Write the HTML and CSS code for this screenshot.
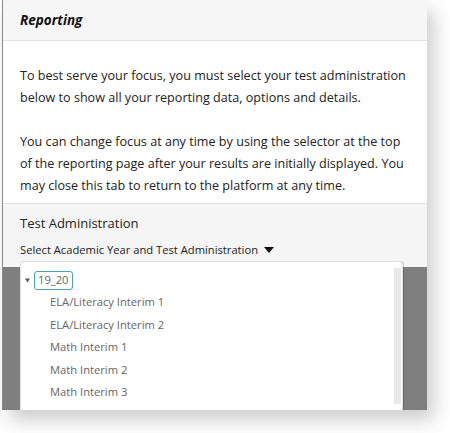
FILE: index.html
```html
<!DOCTYPE html>
<html lang="en">
<head>
<meta charset="utf-8">
<title>Reporting</title>
<link rel="stylesheet" href="styles.css">
</head>
<body>
<div class="frame">
  <div class="modal">
    <div class="modal-header"><h1 class="title">Reporting</h1></div>
    <div class="modal-body">
      <p>To best serve your focus, you must select your test administration below to show all your reporting data, options and details.</p>
      <p>You can change focus at any time by using the selector at the top of the reporting page after your results are initially displayed. You may close this tab to return to the platform at any time.</p>
    </div>
    <div class="section">
      <div class="section-title">Test Administration</div>
      <div class="select-label">Select Academic Year and Test Administration
        <svg class="caret" width="10" height="6" viewBox="0 0 10 6"><path d="M0 0H10L5 6Z" fill="#111"/></svg>
      </div>
    </div>
  </div>
  <div class="dropdown">
    <div class="tree-root">
      <svg class="tree-toggle" width="5" height="5" viewBox="0 0 5 5"><path d="M0 0.5H5L2.5 4.5Z" fill="#555"/></svg>
      <span class="year">19_20</span>
    </div>
    <ul class="tree-items">
      <li>ELA/Literacy Interim 1</li>
      <li>ELA/Literacy Interim 2</li>
      <li>Math Interim 1</li>
      <li>Math Interim 2</li>
      <li>Math Interim 3</li>
    </ul>
    <div class="scrollbar"></div>
  </div>
</div>
</body>
</html>
```
FILE: styles.css
```css
html, body {
  margin: 0;
  padding: 0;
  background: #fff;
}
body {
  font-family: "Open Sans", "Noto Sans", sans-serif;
  color: #222;
  width: 450px;
  height: 433px;
  overflow: hidden;
}
.frame {
  position: relative;
  box-sizing: border-box;
  margin-left: 2px;
  width: 425px;
  height: 410px;
  background: #7f7f7f;
  border-left: 1px solid #8a8a8a;
  overflow: hidden;
  box-shadow: 7px 10px 18px rgba(0, 0, 0, 0.2);
}
.modal {
  background: #fff;
}
.modal-header {
  box-sizing: border-box;
  height: 41px;
  background: #f6f6f6;
  border-bottom: 1px solid #e2e2e2;
  padding-left: 17px;
  display: flex;
  align-items: center;
}
.title {
  margin: 0;
  font-size: 13.5px;
  font-weight: 700;
  font-style: italic;
  color: #111;
  line-height: 20px;
}
.modal-body {
  padding: 24px 17px 6px;
  font-size: 12.6px;
  line-height: 22px;
  color: #222;
}
.modal-body p {
  margin: 0 0 22px;
}
.modal-body p:last-child {
  margin-bottom: 0;
}
.section {
  height: 64px;
  box-sizing: border-box;
  background: #f5f5f5;
  border-top: 1px solid #e4e4e4;
  padding: 8px 17px 0;
}
.section-title {
  font-size: 13px;
  line-height: 22px;
  color: #222;
}
.select-label {
  margin-top: 5px;
  font-size: 11.2px;
  line-height: 22px;
  color: #222;
  display: flex;
  align-items: center;
  gap: 6px;
}
.dropdown {
  position: absolute;
  left: 17px;
  top: 261px;
  width: 383px;
  height: 160px;
  box-sizing: border-box;
  background: #fff;
  border: 1px solid #e2e2e2;
  border-radius: 4px 4px 0 0;
  box-shadow: 1px 0 0 rgba(0, 0, 0, 0.18);
}
.tree-root {
  display: flex;
  align-items: center;
  gap: 4px;
  padding: 9px 0 0 4px;
  height: 19px;
}
.tree-toggle {
  flex: none;
}
.year {
  box-sizing: border-box;
  height: 19px;
  padding: 0 3px;
  border: 1.5px solid #4da0b3;
  border-radius: 3px;
  font-size: 11.2px;
  line-height: 16px;
  color: #666;
}
.tree-items {
  list-style: none;
  margin: 0;
  padding: 1px 0 0 29px;
}
.tree-items li {
  font-size: 11.2px;
  line-height: 22.5px;
  color: #666;
}
.scrollbar {
  position: absolute;
  right: 1px;
  top: 6px;
  width: 7px;
  height: 136px;
  background: #e9e9e9;
}
```
